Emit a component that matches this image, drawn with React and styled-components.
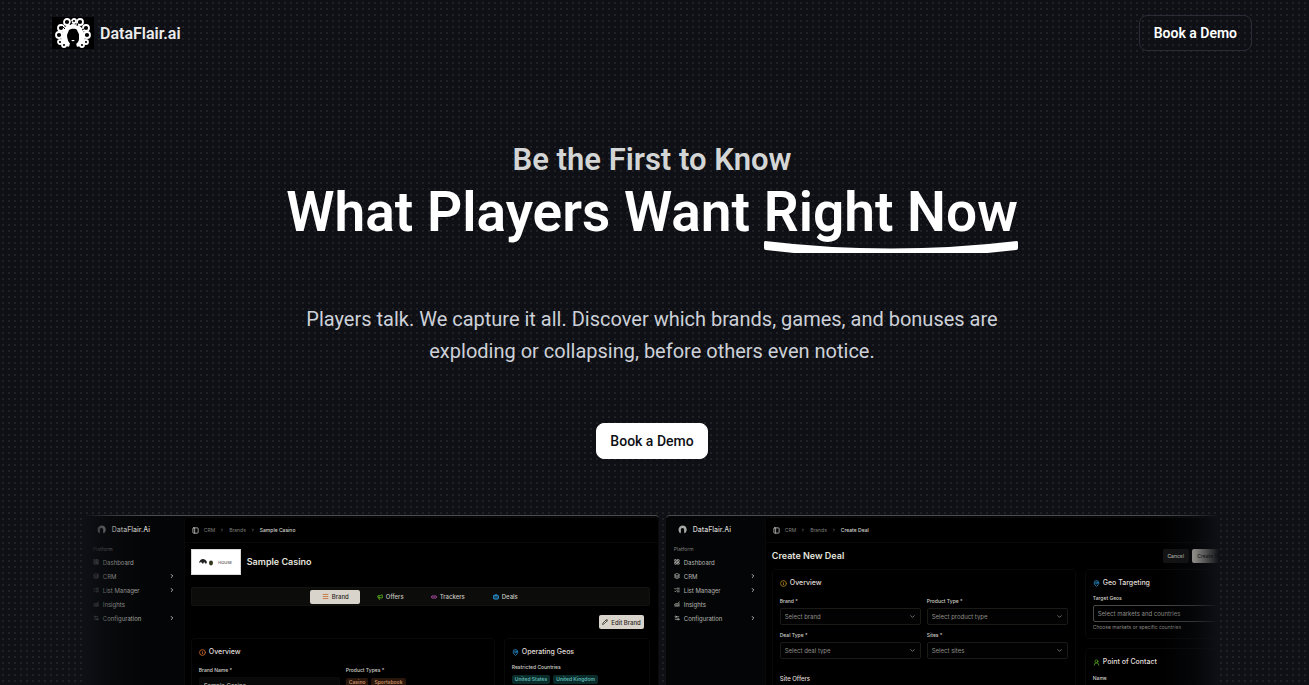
import React from "react";
import styled, { createGlobalStyle } from "styled-components";
import {
  LayoutGrid,
  Layers,
  ListChecks,
  ChartNoAxesCombined,
  Settings2,
  ChevronRight,
  ChevronDown,
  PanelLeft,
  Info,
  MapPin,
  Pencil,
  Menu,
  Megaphone,
  Link2,
  Briefcase,
  UserRound
} from "lucide-react";

const GlobalStyle = createGlobalStyle`
  * {
    box-sizing: border-box;
  }
  body {
    margin: 0;
    background: #0e1015;
    font-family: Roboto, "Liberation Sans", sans-serif;
    -webkit-font-smoothing: antialiased;
  }
  h1, h2, h3, h4, p {
    margin: 0;
    padding: 0;
    font-weight: inherit;
  }
  a {
    color: inherit;
    text-decoration: none;
  }
  button, input, select {
    font-family: inherit;
  }
`;

const Page = styled.div`
  height: 100vh;
  overflow: hidden;
  display: flex;
  flex-direction: column;
  padding-right: 5px;
  color: #fff;
  background-color: #0e1015;
  background-image: radial-gradient(circle, #1f2125 1px, transparent 1px);
  background-size: 6px 6px;
`;

const Header = styled.header`
  width: 100%;
  max-width: 1200px;
  margin: 0 auto;
  padding: 15px 0;
  display: flex;
  align-items: center;
  justify-content: space-between;
`;

const Logo = styled.a`
  display: flex;
  align-items: center;
  gap: 6px;
  font-size: 16px;
  font-weight: 600;
  color: #ececec;
`;

const DemoLink = styled.a`
  display: inline-flex;
  align-items: center;
  height: 36px;
  padding: 0 ${props => (props.$solid ? 13 : 14)}px;
  border-radius: 8px;
  font-size: 14px;
  font-weight: ${props => (props.$solid ? 500 : 600)};
  color: ${props => (props.$solid ? "#0e1015" : "#fff")};
  background: ${props => (props.$solid ? "#fff" : "transparent")};
  border: 1px solid ${props => (props.$solid ? "#fff" : "#2a2d38")};
`;

const Hero = styled.section`
  flex: none;
  padding: 74px 24px 0;
  display: flex;
  flex-direction: column;
  align-items: center;
  text-align: center;
`;

const Title = styled.h1`
  font-size: 55px;
  line-height: 64px;
  font-weight: 600;
`;

const Kicker = styled.span`
  display: block;
  font-size: 31px;
  line-height: 40px;
  color: #d4d6d5;
`;

const Underlined = styled.span`
  position: relative;
  display: inline-block;
  svg {
    position: absolute;
    left: 0;
    bottom: -9px;
    width: 100%;
    height: 12px;
  }
`;

const Lead = styled.p`
  max-width: 740px;
  margin: 59px 0 56px;
  font-size: 20px;
  line-height: 32px;
  color: #cdd0d8;
`;

const Showcase = styled.section`
  position: relative;
  flex: 1;
  min-height: 0;
  width: 87%;
  margin: 56px auto 0;
  overflow: hidden;
  font-family: Inter, "Liberation Sans", sans-serif;
  &:before,
  &:after {
    content: "";
    position: absolute;
    z-index: 1;
    top: 0;
    bottom: 0;
    width: 60px;
    pointer-events: none;
  }
  &:before {
    left: 0;
    background: linear-gradient(to right, #0e1015, rgba(14, 16, 21, 0.4) 40%, transparent);
  }
  &:after {
    right: 0;
    background: linear-gradient(to left, #0e1015, rgba(14, 16, 21, 0.4) 40%, transparent);
  }
`;

const Track = styled.div`
  display: flex;
  gap: 7px;
`;

const Screen = styled.article`
  flex: none;
  width: 574px;
  min-height: 320px;
  display: flex;
  background: #040506;
  border-top: 1px solid #4b4d50;
  border-radius: 4px;
  overflow: hidden;
`;

const Sidebar = styled.aside`
  width: 99px;
  padding: 8px 9px 0 8px;
`;

const SideBrand = styled.div`
  display: flex;
  align-items: center;
  gap: 6px;
  height: 10px;
  padding-left: 4px;
  font-size: 7px;
  font-weight: 500;
  color: #d4d4d0;
`;

const SideTitle = styled.p`
  margin: 11px 0 2px;
  font-size: 5px;
  line-height: 8px;
  color: #7c7c7a;
`;

const SideItem = styled.a`
  display: flex;
  align-items: center;
  gap: 4px;
  height: 14px;
  font-size: 6px;
  color: #b6b6b2;
  svg:last-child:not(:first-child) {
    margin-left: auto;
  }
`;

const Main = styled.div`
  flex: 1;
  margin-top: 1px;
  background: #000;
  border: 1px solid #090909;
  border-radius: 5px;
`;

const Crumbs = styled.nav`
  display: flex;
  align-items: center;
  gap: 5px;
  height: 25px;
  padding-left: 7px;
  border-bottom: 1px solid #080808;
  font-size: 5px;
  color: #7f7f7b;
  svg:first-child {
    color: #b6b6b2;
  }
  b {
    font-weight: 500;
    color: #d6d6d0;
  }
`;

const Body = styled.div`
  padding: 6px 8px 0 6px;
`;

const Row = styled.div`
  display: flex;
  align-items: center;
  justify-content: ${props => props.$justify || "flex-start"};
  gap: ${props => props.$gap || 6}px;
  padding-right: ${props => props.$end || 0}px;
`;

const ScreenTitle = styled.h2`
  font-size: 9px;
  font-weight: 600;
  line-height: 14px;
  color: #e4e3de;
`;

const Thumb = styled.div`
  display: flex;
  align-items: center;
  justify-content: center;
  gap: 5px;
  width: 50px;
  height: 26px;
  background: #fff;
  border: 1px solid #d9d9d6;
  color: #222;
  font-size: 4px;
`;

const Tabs = styled.div`
  display: flex;
  align-items: center;
  justify-content: center;
  gap: 5px;
  height: 19px;
  margin: 12px 0 9px;
  background: #0c0c0a;
  border: 1px solid #12120f;
  border-radius: 2px;
`;

const MiniButton = styled.button`
  display: inline-flex;
  align-items: center;
  justify-content: center;
  gap: 3px;
  height: 14px;
  min-width: ${props => props.$width}px;
  padding: 0 3px;
  border: 0;
  border-radius: 2px;
  font-size: ${props => props.$size || 6}px;
  font-weight: 500;
  white-space: nowrap;
  color: ${props => (props.$active ? "#2a2723" : "#c9c8c2")};
  background: ${props => (props.$active ? "#d9d4cb" : props.$bg || "transparent")};
`;

const Columns = styled.div`
  display: grid;
  grid-template-columns: 304px 1fr;
  gap: 9px;
  align-items: start;
  margin-top: ${props => props.$top}px;
`;

const Panel = styled.section`
  min-height: ${props => props.$height || 0}px;
  padding: 8px 7px 0;
  margin-bottom: 9px;
  border: 1px solid #090909;
  border-radius: 4px;
`;

const PanelTitle = styled.h3`
  display: flex;
  align-items: center;
  gap: 3px;
  margin-bottom: ${props => props.$gap}px;
  font-size: 7px;
  line-height: 10px;
  font-weight: 500;
  color: #e0dfda;
  svg {
    color: ${props => props.$color};
  }
`;

const SubTitle = styled.h4`
  margin-top: 15px;
  font-size: 6px;
  line-height: 10px;
  font-weight: 500;
  color: #e0dfda;
`;

const Fields = styled.div`
  display: grid;
  grid-template-columns: 1fr 1fr;
  gap: 6px;
`;

const Field = styled.label`
  display: block;
  font-size: 5px;
  line-height: 8px;
  font-weight: 500;
  color: #d0cfca;
`;

const SelectBox = styled.span`
  position: relative;
  display: block;
  margin-top: 3px;
  svg {
    position: absolute;
    right: 5px;
    top: 5px;
    color: #7d7c78;
  }
`;

const Select = styled.select`
  display: block;
  appearance: none;
  width: 100%;
  height: 17px;
  padding: 0 4px;
  border: 1px solid #1a1a17;
  border-radius: 2px;
  background: #020202;
  font-size: 6px;
  color: #8f8e89;
`;

const TextInput = styled.input`
  display: block;
  width: 100%;
  height: 17px;
  margin-top: 3px;
  padding: 0 4px;
  border: 1px solid ${props => props.$line || "#0c0b0b"};
  border-radius: 2px;
  background: ${props => (props.$line ? "#000" : "#0a0909")};
  font-size: 6px;
  color: #c9c8c2;
  &::placeholder {
    color: #8f8e89;
    opacity: 1;
  }
`;

const Chips = styled.div`
  display: flex;
  gap: 3px;
  margin-top: ${props => props.$top || 0}px;
`;

const Chip = styled.span`
  padding: 0 3px;
  border-radius: 2px;
  font-size: 5px;
  line-height: 9px;
  font-weight: 600;
  white-space: nowrap;
  color: ${props => (props.$teal ? "#5fb5ae" : "#c58d64")};
  background: ${props => (props.$teal ? "#0a2d2c" : "#2a170c")};
`;

const Hint = styled.p`
  font-size: 5px;
  line-height: 8px;
  margin-top: 1px;
  color: #888782;
`;

// ring centres around the hair, left to right
const curls = [
  [8, 25, 2],
  [7, 18, 3],
  [9, 11, 3],
  [15, 5, 3],
  [22, 4, 2],
  [28, 5, 3],
  [34, 11, 3],
  [35, 18, 3],
  [34, 25, 2],
  [12, 28, 2],
  [30, 28, 2]
];

const BrandMark = () => (
  <svg width="42" height="32" viewBox="0 0 42 32" aria-hidden="true">
    <rect width="42" height="32" fill="#000" />
    <path
      d="M13 29C8 26 9 21 10 16c1-6 6-9 11-9s10 3 11 9c1 5 2 10-3 13l-5 1c-1-1-1-2 0-3 3-2 4-5 2-12h-9c-2 7-1 10 2 12 1 1 1 2 0 3z"
      fill="#fff"
    />
    <g fill="#000" stroke="#fff" strokeWidth="1.8">
      {curls.map(([x, y, r]) => (
        <circle key={`${x}-${y}`} cx={x} cy={y} r={r} />
      ))}
    </g>
    <path d="M18 8l2-4M25 9l1-3M13 12l-3-3M30 13l2-1" stroke="#000" strokeWidth="1" />
    <path
      d="M17 13c2-1 6-2 8 0l2 5c0 4-1 6-3 8l1 4h-8l1-4c-2-2-3-5-3-8z"
      fill="#000"
    />
    <path d="M19 23h4l-2 1.6z" fill="#fff" />
  </svg>
);

const SmallMark = () => (
  <svg width="9" height="9" viewBox="0 0 18 18" aria-hidden="true">
    <path
      d="M5 17C0 14 0 6 4 3c3-3 8-3 11 0 4 4 3 11-2 14l-1-5c1-3 0-6-3-6s-4 3-3 6z"
      fill="#a8a8a6"
    />
  </svg>
);

const sideItems = [
  { text: "Dashboard", icon: LayoutGrid },
  { text: "CRM", icon: Layers, open: true },
  { text: "List Manager", icon: ListChecks, open: true },
  { text: "Insights", icon: ChartNoAxesCombined },
  { text: "Configuration", icon: Settings2, open: true }
];

const AppScreen = ({ page, children }) => (
  <Screen>
    <Sidebar>
      <SideBrand>
        <SmallMark />
        DataFlair.Ai
      </SideBrand>
      <SideTitle>Platform</SideTitle>
      {sideItems.map(({ text, icon: Icon, open }) => (
        <SideItem key={text} href="#">
          <Icon size={6} strokeWidth={3} />
          {text}
          {open && <ChevronRight size={6} strokeWidth={4} />}
        </SideItem>
      ))}
    </Sidebar>
    <Main>
      <Crumbs>
        <PanelLeft size={7} strokeWidth={3} />
        <span>CRM</span>
        <ChevronRight size={4} strokeWidth={4} />
        <span>Brands</span>
        <ChevronRight size={4} strokeWidth={4} />
        <b>{page}</b>
      </Crumbs>
      <Body>{children}</Body>
    </Main>
  </Screen>
);

const SelectField = ({ label, text }) => (
  <Field>
    {label}
    <SelectBox>
      <Select>
        <option>{text}</option>
      </Select>
      <ChevronDown size={7} strokeWidth={3} />
    </SelectBox>
  </Field>
);

const BrandScreen = () => (
  <AppScreen page="Sample Casino">
    <Row>
      <Thumb>
        <svg width="14" height="8" viewBox="0 0 14 8" aria-hidden="true">
          <path d="M0 5c1-5 6-5 8-1L7 6 5 4 4 6 2 4z" fill="#222" />
          <ellipse cx="12" cy="5" rx="2" ry="2.4" fill="#33361c" />
        </svg>
        HOUSE
      </Thumb>
      <ScreenTitle>Sample Casino</ScreenTitle>
    </Row>
    <Tabs>
      <MiniButton $active $width={50}>
        <Menu size={7} strokeWidth={3} color="#c9743a" />
        Brand
      </MiniButton>
      <MiniButton $width={50}>
        <Megaphone size={6} strokeWidth={4} color="#4f9a1c" />
        Offers
      </MiniButton>
      <MiniButton $width={55}>
        <Link2 size={6} strokeWidth={4} color="#a04a9c" />
        Trackers
      </MiniButton>
      <MiniButton $width={50}>
        <Briefcase size={6} strokeWidth={4} color="#2583bd" />
        Deals
      </MiniButton>
    </Tabs>
    <Row $justify="flex-end" $end={6}>
      <MiniButton $active $width={44}>
        <Pencil size={6} strokeWidth={3} />
        Edit Brand
      </MiniButton>
    </Row>
    <Columns $top={9}>
      <Panel $height={120}>
        <PanelTitle $color="#c9682c" $gap={9}>
          <Info size={7} strokeWidth={3} />
          Overview
        </PanelTitle>
        <Fields>
          <Field>
            Brand Name *
            <TextInput defaultValue="Sample Casino" />
          </Field>
          <div>
            <Field as="span">Product Types *</Field>
            <Chips $top={4}>
              <Chip>Casino</Chip>
              <Chip>Sportsbook</Chip>
            </Chips>
          </div>
        </Fields>
      </Panel>
      <Panel $height={120}>
        <PanelTitle $color="#2583bd" $gap={6}>
          <MapPin size={7} strokeWidth={3} />
          Operating Geos
        </PanelTitle>
        <Field as="span">Restricted Countries</Field>
        <Chips $top={4}>
          <Chip $teal>United States</Chip>
          <Chip $teal>United Kingdom</Chip>
        </Chips>
      </Panel>
    </Columns>
  </AppScreen>
);

const DealScreen = () => (
  <AppScreen page="Create Deal">
    <Row $justify="space-between">
      <ScreenTitle>Create New Deal</ScreenTitle>
      <Row $gap={3}>
        <MiniButton $width={26} $size={5} $bg="#141414">
          Cancel
        </MiniButton>
        <MiniButton $active $size={5} $width={39}>
          Create Deal
        </MiniButton>
      </Row>
    </Row>
    <Columns $top={6}>
      <Panel $height={140}>
        <PanelTitle $color="#a97b15" $gap={9}>
          <Info size={7} strokeWidth={3} />
          Overview
        </PanelTitle>
        <Fields>
          <SelectField label="Brand *" text="Select brand" />
          <SelectField label="Product Type *" text="Select product type" />
          <SelectField label="Deal Type *" text="Select deal type" />
          <SelectField label="Sites *" text="Select sites" />
        </Fields>
        <SubTitle>Site Offers</SubTitle>
      </Panel>
      <div>
        <Panel $height={70}>
          <PanelTitle $color="#2583bd" $gap={6}>
            <MapPin size={7} strokeWidth={3} />
            Geo Targeting
          </PanelTitle>
          <Field>
            Target Geos
            <TextInput $line="#4a4945" placeholder="Select markets and countries" />
          </Field>
          <Hint>Choose markets or specific countries</Hint>
        </Panel>
        <Panel $height={70}>
          <PanelTitle $color="#4f9a1c" $gap={7}>
            <UserRound size={7} strokeWidth={3} />
            Point of Contact
          </PanelTitle>
          <Field>
            Name
            <TextInput />
          </Field>
        </Panel>
      </div>
    </Columns>
  </AppScreen>
);

export default () => (
  <>
    <GlobalStyle />
    <Page>
      <Header>
        <Logo href="#">
          <BrandMark />
          DataFlair.ai
        </Logo>
        <DemoLink href="#demo">Book a Demo</DemoLink>
      </Header>
      <Hero>
        <Title>
          <Kicker>Be the First to Know</Kicker>
          What Players Want{" "}
          <Underlined>
            Right Now
            <svg viewBox="0 0 253 12" preserveAspectRatio="none" aria-hidden="true">
              <path
                d="M1 0Q0 0 0 2V7Q0 9 2 9Q125 24 251 9Q253 9 253 7V2Q253 0 252 0Q126 15 1 0Z"
                fill="#fff"
              />
            </svg>
          </Underlined>
        </Title>
        <Lead>
          Players talk. We capture it all. Discover which brands, games, and
          bonuses are exploding or collapsing, before others even notice.
        </Lead>
        <DemoLink href="#demo" $solid>
          Book a Demo
        </DemoLink>
      </Hero>
      <Showcase>
        <Track>
          <BrandScreen />
          <DealScreen />
        </Track>
      </Showcase>
    </Page>
  </>
);
